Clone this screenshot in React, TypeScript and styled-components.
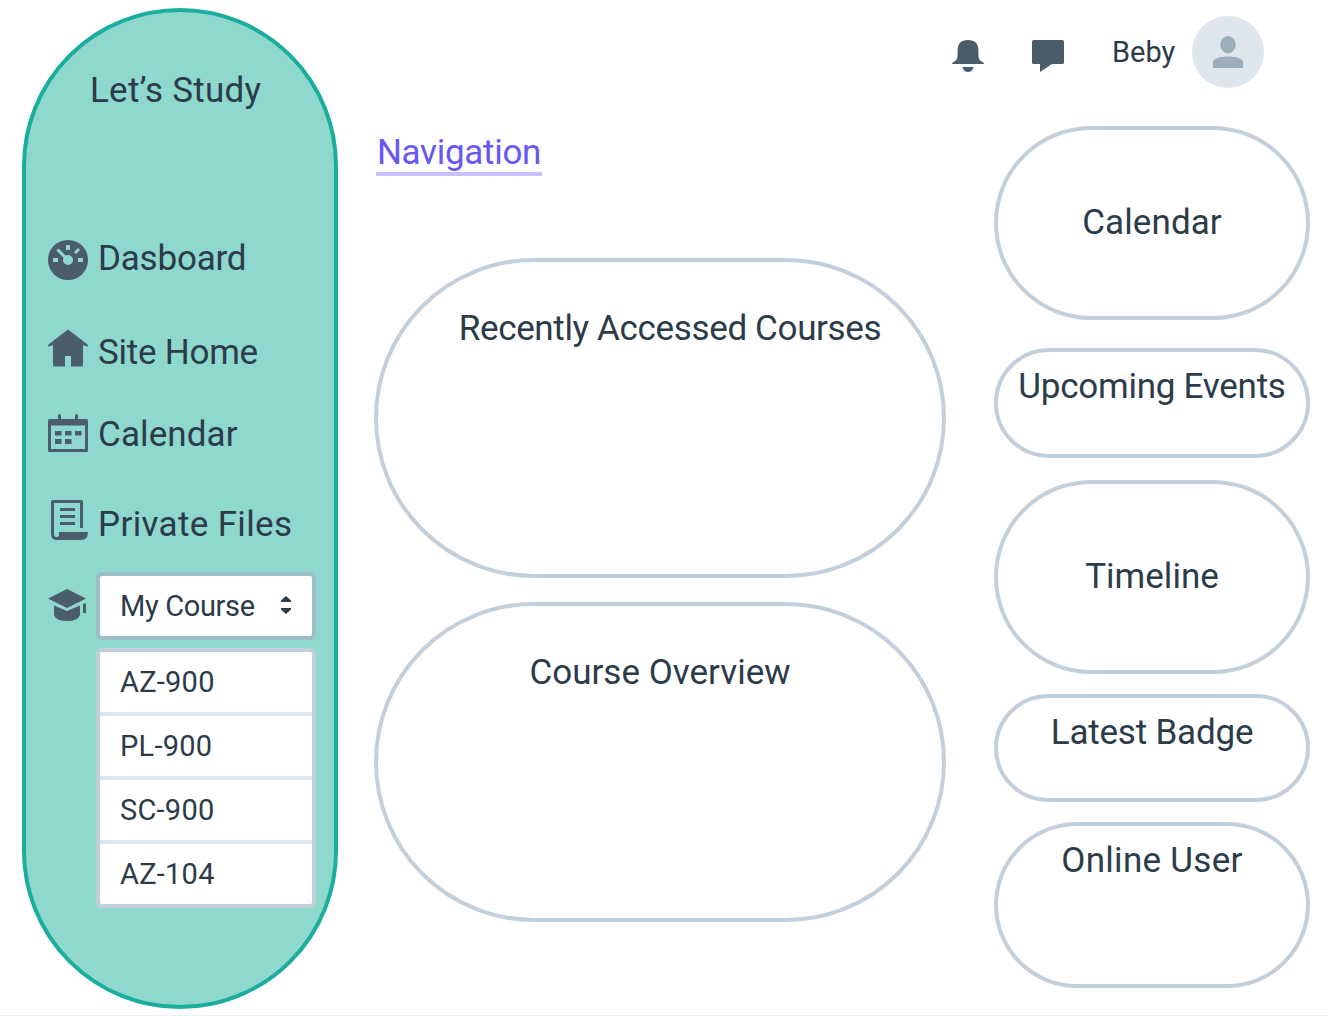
import React from "react";
import styled, { createGlobalStyle } from "styled-components";

const ink = "#2c3b49";
const iconColor = "#4b5c6b";

const GlobalStyle = createGlobalStyle`
  *, *::before, *::after { box-sizing: border-box; }
  body {
    margin: 0;
    background: #fff;
    color: ${ink};
    font-family: Roboto, "Liberation Sans", sans-serif;
    font-size: 35px;
  }
`;

const Page = styled.div`
  display: flex;
  width: 1328px;
  height: 1016px;
  padding: 8px 0 0 22px;
  overflow: hidden;
  border-bottom: 1px solid #efefef;
`;

const Sidebar = styled.aside`
  flex: none;
  width: 316px;
  height: 1001px;
  padding: 59px 18px 0 22px;
  border: 4px solid #1bae9f;
  border-radius: 158px;
  background: #8fd8ce;
`;

const Text = styled.span<{ $track?: number }>`
  line-height: 40px;
  white-space: nowrap;
  letter-spacing: ${(p) => p.$track ?? 0}px;
`;

const Brand = styled.div`
  display: flex;
  padding-left: 42px;
`;

const Nav = styled.nav`
  display: grid;
  grid-template-rows: 90px 85px 87px 72px auto;
  margin-top: 127px;
`;

const NavItem = styled.a<{ $iconDrop?: number; $textDrop?: number }>`
  display: flex;
  align-items: flex-start;
  gap: 10px;
  svg { margin-top: ${(p) => p.$iconDrop ?? 0}px; }
  span { margin-top: ${(p) => p.$textDrop ?? 0}px; }
`;

const CourseRow = styled.div`
  display: flex;
  align-items: flex-start;
  gap: 8px;
  & > svg { margin-top: 13px; }
`;

const Icon = styled.svg`
  flex: none;
  display: block;
  fill: ${iconColor};
`;

const CourseMenu = styled.div`
  display: flex;
  flex-direction: column;
  gap: 8px;
  width: 220px;
  font-size: 29px;
`;

const Select = styled.button`
  display: flex;
  align-items: center;
  justify-content: space-between;
  height: 68px;
  padding: 0 20px;
  border: 4px solid #9abfc5;
  border-radius: 6px;
  background: #fff;
  color: inherit;
  font: inherit;
`;

const SortArrows = styled(Icon)`
  margin-bottom: 2px;
  fill: ${ink};
`;

const Options = styled.ul`
  margin: 0;
  padding: 0;
  list-style: none;
  border: 4px solid #c3cedb;
  border-radius: 6px;
  background: #fff;
`;

const Option = styled.li`
  display: flex;
  align-items: center;
  height: 60px;
  padding-left: 20px;
  & + & {
    height: 64px;
    border-top: 4px solid #dfe5ee;
  }
`;

const Content = styled.div`
  display: flex;
  flex-direction: column;
  margin-left: 36px;
  width: 936px;
`;

const Header = styled.header`
  display: flex;
  justify-content: flex-end;
  align-items: center;
  height: 88px;
  padding-right: 46px;
  font-size: 29px;
`;

const HeaderIcon = styled(Icon)`
  margin: 8px 48px 0 0;
`;

const UserName = styled(Text)`
  width: 64px;
`;

const Avatar = styled.div`
  display: grid;
  place-items: center;
  width: 72px;
  height: 72px;
  margin-left: 16px;
  border-radius: 50%;
  background: #dfe5ed;
`;

const PersonIcon = styled(Icon)`
  fill: #9dadb9;
`;

const Columns = styled.div`
  display: flex;
  justify-content: space-between;
  padding-top: 30px;
`;

const Main = styled.main`
  display: flex;
  flex-direction: column;
  width: 572px;
`;

const NavLink = styled.a`
  display: flex;
  justify-content: center;
  align-self: flex-start;
  width: 166px;
  height: 50px;
  margin: 0 0 82px 2px;
  padding-top: 7px;
  border-bottom: 4px solid #c6c0fb;
  color: #6757f5;
`;

const Card = styled.section<{ $height: number; $gap: number; $top: number; $shift?: number }>`
  display: flex;
  justify-content: center;
  align-items: flex-start;
  height: ${(p) => p.$height}px;
  margin-bottom: ${(p) => p.$gap}px;
  padding-top: ${(p) => p.$top}px;
  padding-left: ${(p) => p.$shift ?? 0}px;
  border: 4px solid #c3cfdb;
  border-radius: 999px;
`;

const Aside = styled.aside`
  display: flex;
  flex-direction: column;
  width: 316px;
`;

const courses = ["AZ-900", "PL-900", "SC-900", "AZ-104"];

const widgets = [
  { title: "Calendar", height: 194, gap: 28, top: 73, track: 0.1 },
  { title: "Upcoming Events", height: 110, gap: 22, top: 15, track: -0.25 },
  { title: "Timeline", height: 194, gap: 20, top: 73, track: 0 },
  { title: "Latest Badge", height: 108, gap: 20, top: 15, track: -0.2 },
  { title: "Online User", height: 166, gap: 0, top: 15, track: 0.3 },
];

const GaugeIcon = () => (
  <Icon width="40" height="40" viewBox="0 0 40 40">
    <circle cx="20" cy="20" r="20" />
    <g stroke="#8fd8ce" fill="none">
      <path strokeWidth="4" d="M20 5v5M5 20h5M30 20h5" />
      <path strokeWidth="3" d="M27 13l4-4M9.500 9.500L18 18" />
    </g>
    <circle cx="20" cy="20" r="5" fill="#8fd8ce" />
  </Icon>
);

const HomeIcon = () => (
  <Icon width="40" height="40" viewBox="0 0 40 40">
    <path d="M20 1.500L39.500 16.500Q40.500 18 39 18.500L35 17V37q0 1.500-1.500 1.500H23V28h-6v10.500H6.500Q5 38.500 5 37V17L1 18.500Q-.5 18 .5 16.500Z" />
  </Icon>
);

const CalendarIcon = () => (
  <Icon width="40" height="40" viewBox="0 0 40 40">
    <path fillRule="evenodd" d="M1.500 6H10V2.500q0-1.500 1.500-1.500T13 2.500V6h14V2.500q0-1.500 1.500-1.500T30 2.500V6h8.500Q40 6 40 7.500v30q0 1.500-1.500 1.500h-37Q0 39 0 37.500v-30Q0 6 1.500 6ZM3 12.500V36h34V12.500Z" />
    <path d="M7 18h6.500v4.500H7zM17 18h6.500v4.500H17zM27 18h6.500v4.500H27zM7 26h6.500v5H7zM17 26h6.500v5H17z" />
  </Icon>
);

const ScrollIcon = () => (
  <Icon width="40" height="40" viewBox="0 0 40 40">
    <path fillRule="evenodd" d="M5 0H33.500Q35 0 35 1.500V28H32V3H6V34Q6 37 8.500 37Q11 37 11 34.500V32H40Q40 40 33 40H9Q3 40 3 34V2Q3 0 5 0Z" />
    <path d="M12 8h15v3H12zM12 15h15v3H12zM12 22h15v3H12z" />
  </Icon>
);

const CapIcon = () => (
  <Icon width="40" height="40" viewBox="0 0 40 40">
    <path d="M19 4L38 13.500L19 23L0 13.500Z" />
    <path d="M6 20.500L19 26L32 20.500V30q-2 6-13 6T6 30ZM35 19l3-1v10h-3z" />
  </Icon>
);

export default function App() {
  return (
    <>
      <GlobalStyle />
      <Page>
        <Sidebar>
          <Brand><Text $track={0.25}>Let’s Study</Text></Brand>
          <Nav>
            <NavItem $iconDrop={2} $textDrop={1}><GaugeIcon /><Text $track={-0.2}>Dasboard</Text></NavItem>
            <NavItem $textDrop={5}><HomeIcon /><Text $track={-0.25}>Site Home</Text></NavItem>
            <NavItem $textDrop={2}><CalendarIcon /><Text $track={0.1}>Calendar</Text></NavItem>
            <NavItem $textDrop={5}><ScrollIcon /><Text $track={0.35}>Private Files</Text></NavItem>
            <CourseRow>
              <CapIcon />
              <CourseMenu>
                <Select>
                  <Text $track={-0.35}>My Course</Text>
                  <SortArrows width="12" height="20" viewBox="0 0 12 20">
                    <path d="M6 1L11 5.500V7H1V5.500ZM6 19L1 14.500V13H11V14.500Z" />
                  </SortArrows>
                </Select>
                <Options>
                  {courses.map((c) => <Option key={c}><Text $track={0.25}>{c}</Text></Option>)}
                </Options>
              </CourseMenu>
            </CourseRow>
          </Nav>
        </Sidebar>
        <Content>
          <Header>
            <HeaderIcon width="32" height="32" viewBox="0 0 32 32">
              <path d="M16 0Q26.500 0 26.500 11V15q0 5 3 6.500Q32 22 32 24H0Q0 22 2.500 21.500q3-1.500 3-6.500V11Q5.500 0 16 0ZM10.500 27h11q-1 5-5.500 5t-5.500-5Z" />
            </HeaderIcon>
            <HeaderIcon width="32" height="32" viewBox="0 0 32 32">
              <path d="M1.500 0h29Q32 0 32 1.500v21q0 1.500-1.500 1.500H20L8 32V24H1.500Q0 24 0 22.500v-21Q0 0 1.500 0Z" />
            </HeaderIcon>
            <UserName>Beby</UserName>
            <Avatar>
              <PersonIcon width="30" height="32" viewBox="0 0 30 32">
                <ellipse cx="15" cy="8.700" rx="7.700" ry="8.700" />
                <path d="M0 32V27Q0 20.500 15 20.500T30 27V32Z" />
              </PersonIcon>
            </Avatar>
          </Header>
          <Columns>
            <Main>
              <NavLink><Text $track={-0.3}>Navigation</Text></NavLink>
              <Card $height={320} $gap={24} $top={47} $shift={20}><Text $track={-0.35}>Recently Accessed Courses</Text></Card>
              <Card $height={320} $gap={0} $top={47}><Text>Course Overview</Text></Card>
            </Main>
            <Aside>
              {widgets.map((w) => (
                <Card key={w.title} $height={w.height} $gap={w.gap} $top={w.top}>
                  <Text $track={w.track}>{w.title}</Text>
                </Card>
              ))}
            </Aside>
          </Columns>
        </Content>
      </Page>
    </>
  );
}
